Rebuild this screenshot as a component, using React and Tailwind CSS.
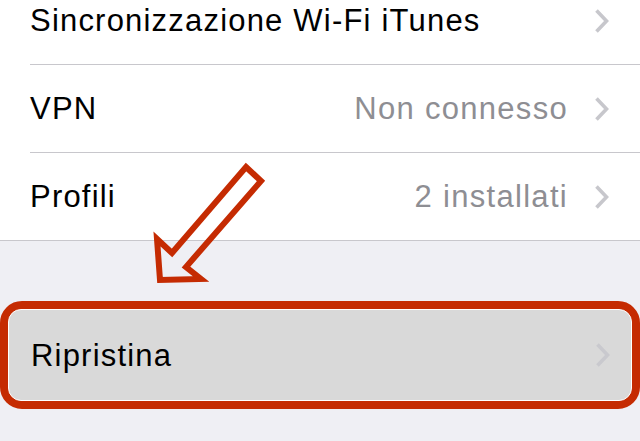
import React from "react";

function Chevron({ color = "#c7c7cc" }) {
  return (
    <svg width="15" height="24" viewBox="0 0 15 24" className="shrink-0">
      <path d="M2.5 1.5 L12.5 12 L2.5 22.5" fill="none" stroke={color} strokeWidth="3.6" strokeLinejoin="miter" />
    </svg>
  );
}

function Row({ label, value, last }) {
  return (
    <div className="bg-white">
      <div className="h-[87px] flex items-center pl-[30px] pr-[31px]">
        <span className="text-[31px] leading-none tracking-[1.2px] text-black">{label}</span>
        <div className="ml-auto flex items-center">
          {value && (
            <span className="text-[31px] leading-none tracking-[1.3px] text-[#8e8e93] mr-[26px]">{value}</span>
          )}
          <Chevron />
        </div>
      </div>
      {last ? (
        <div className="h-px bg-[#c8c7cc]" />
      ) : (
        <div className="pl-[30px]">
          <div className="h-px bg-[#c8c7cc]" />
        </div>
      )}
    </div>
  );
}

export default function App() {
  return (
    <div
      className="relative w-[640px] h-[441px] overflow-hidden bg-[#efeff4]"
      style={{ fontFamily: '"Liberation Sans", Arial, sans-serif' }}
    >
      <div className="mt-[-23px]">
        <Row label="Sincronizzazione Wi-Fi iTunes" />
        <Row label="VPN" value="Non connesso" />
        <Row label="Profili" value="2 installati" last />
      </div>
      <div className="pt-[60px]">
        <div className="h-[108px] border-[8px] border-[#c52b02] rounded-[22px] bg-[#c52b02]">
          <div className="h-full rounded-[13px] border border-white bg-[#d9d9d9] flex items-center pl-[22px] pr-[21px]">
            <span className="text-[31px] leading-none tracking-[1.2px] text-black">Ripristina</span>
            <div className="ml-auto">
              <Chevron color="#c9c9ce" />
            </div>
          </div>
        </div>
      </div>
      <svg className="absolute inset-0 pointer-events-none" width="640" height="441" viewBox="0 0 640 441">
        <path
          d="M246 167 L261 181 L186 267 L201 279 L160 280 L157 239 L172 253 Z"
          fill="none"
          stroke="#c52b02"
          strokeWidth="6"
          strokeLinejoin="miter"
        />
      </svg>
    </div>
  );
}
